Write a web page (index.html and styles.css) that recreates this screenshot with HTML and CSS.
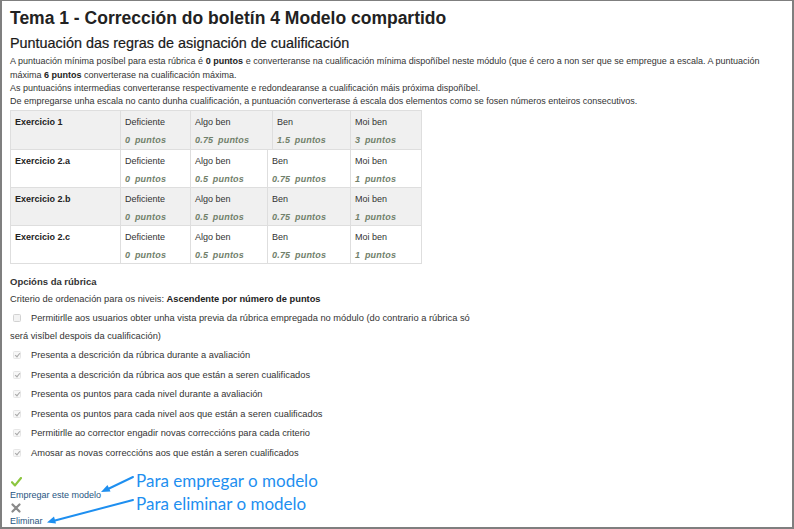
FILE: index.html
```html
<!DOCTYPE html>
<html lang="gl">
<head>
<meta charset="utf-8">
<title>Tema 1 - Corrección do boletín 4 Modelo compartido</title>
<link rel="stylesheet" href="styles.css">
</head>
<body>
<div class="frame">
  <h1 class="title">Tema 1 - Corrección do boletín 4 Modelo compartido</h1>
  <h2 class="subtitle">Puntuación das regras de asignación de cualificación</h2>
  <div class="intro">
    <p>A puntuación mínima posíbel para esta rúbrica é <b>0 puntos</b> e converteranse na cualificación mínima dispoñíbel neste módulo (que é cero a non ser que se empregue a escala. A puntuación<br>máxima <b>6 puntos</b> converterase na cualificación máxima.</p>
    <p>As puntuacións intermedias converteranse respectivamente e redondearanse a cualificación máis próxima dispoñíbel.</p>
    <p>De empregarse unha escala no canto dunha cualificación, a puntuación converterase á escala dos elementos como se fosen números enteiros consecutivos.</p>
  </div>

  <div class="rubric">
    <div class="crit shaded first wide">
      <div class="cell name">Exercicio 1</div>
      <div class="cell"><span class="lvl">Deficiente</span><span class="pts">0 <i>puntos</i></span></div>
      <div class="cell"><span class="lvl">Algo ben</span><span class="pts">0.75 <i>puntos</i></span></div>
      <div class="cell"><span class="lvl">Ben</span><span class="pts">1.5 <i>puntos</i></span></div>
      <div class="cell"><span class="lvl">Moi ben</span><span class="pts">3 <i>puntos</i></span></div>
    </div>
    <div class="crit">
      <div class="cell name">Exercicio 2.a</div>
      <div class="cell"><span class="lvl">Deficiente</span><span class="pts">0 <i>puntos</i></span></div>
      <div class="cell"><span class="lvl">Algo ben</span><span class="pts">0.5 <i>puntos</i></span></div>
      <div class="cell"><span class="lvl">Ben</span><span class="pts">0.75 <i>puntos</i></span></div>
      <div class="cell"><span class="lvl">Moi ben</span><span class="pts">1 <i>puntos</i></span></div>
    </div>
    <div class="crit shaded">
      <div class="cell name">Exercicio 2.b</div>
      <div class="cell"><span class="lvl">Deficiente</span><span class="pts">0 <i>puntos</i></span></div>
      <div class="cell"><span class="lvl">Algo ben</span><span class="pts">0.5 <i>puntos</i></span></div>
      <div class="cell"><span class="lvl">Ben</span><span class="pts">0.75 <i>puntos</i></span></div>
      <div class="cell"><span class="lvl">Moi ben</span><span class="pts">1 <i>puntos</i></span></div>
    </div>
    <div class="crit last">
      <div class="cell name">Exercicio 2.c</div>
      <div class="cell"><span class="lvl">Deficiente</span><span class="pts">0 <i>puntos</i></span></div>
      <div class="cell"><span class="lvl">Algo ben</span><span class="pts">0.5 <i>puntos</i></span></div>
      <div class="cell"><span class="lvl">Ben</span><span class="pts">0.75 <i>puntos</i></span></div>
      <div class="cell"><span class="lvl">Moi ben</span><span class="pts">1 <i>puntos</i></span></div>
    </div>
  </div>

  <div class="options">
    <h3 class="opt-title">Opcións da rúbrica</h3>
    <div class="sort">Criterio de ordenación para os niveis: <b>Ascendente por número de puntos</b></div>
    <div class="opt"><span class="cb"></span>Permitirlle aos usuarios obter unha vista previa da rúbrica empregada no módulo (do contrario a rúbrica só será visíbel despois da cualificación)</div>
    <div class="opt"><span class="cb on"></span>Presenta a descrición da rúbrica durante a avaliación</div>
    <div class="opt"><span class="cb on"></span>Presenta a descrición da rúbrica aos que están a seren cualificados</div>
    <div class="opt"><span class="cb on"></span>Presenta os puntos para cada nivel durante a avaliación</div>
    <div class="opt"><span class="cb on"></span>Presenta os puntos para cada nivel aos que están a seren cualificados</div>
    <div class="opt"><span class="cb on"></span>Permitirlle ao corrector engadir novas correccións para cada criterio</div>
    <div class="opt"><span class="cb on"></span>Amosar as novas correccións aos que están a seren cualificados</div>
  </div>

  <div class="actions">
    <a class="action" href="#">
      <svg class="ico" width="11" height="10" viewBox="0 0 11 10"><path d="M1 5.2 L4 8.4 L10 1" fill="none" stroke="#8cc63f" stroke-width="2.2" stroke-linecap="round" stroke-linejoin="round"/></svg>
      <span>Empregar este modelo</span>
    </a>
    <a class="action" href="#">
      <svg class="ico" width="10" height="10" viewBox="0 0 10 10"><path d="M1.5 1.5 L8.5 8.5 M8.5 1.5 L1.5 8.5" fill="none" stroke="#8a8a8a" stroke-width="2.2" stroke-linecap="round"/></svg>
      <span>Eliminar</span>
    </a>
  </div>

  <div class="note note-1">Para empregar o modelo</div>
  <div class="note note-2">Para eliminar o modelo</div>
  <svg class="arrows" width="794" height="529" viewBox="0 0 794 529">
    <g stroke="#1e8ff0" stroke-width="2" fill="#1e8ff0" stroke-linecap="round">
      <line x1="133" y1="477" x2="108" y2="489"/>
      <polygon points="101,492 107.5,485 110.5,491.5" stroke="none"/>
      <line x1="133" y1="500" x2="55" y2="520.5"/>
      <polygon points="47,522.5 54,516.5 56,523.5" stroke="none"/>
    </g>
  </svg>
</div>
</body>
</html>
```

FILE: styles.css
```css
* { box-sizing: border-box; }
html, body { margin: 0; padding: 0; background: #fff; }
body {
  font-family: "Liberation Sans", Arial, sans-serif;
  color: #333;
}
.frame {
  position: relative;
  width: 794px;
  height: 529px;
  border: 2px solid #7f7f7f;
  border-top-width: 1px;
  padding: 6px 8px 0 8px;
  overflow: hidden;
}
.title {
  margin: 0;
  font-size: 17.5px;
  line-height: 22px;
  font-weight: bold;
  color: #222;
}
.subtitle {
  margin: 6px 0 0 0;
  font-size: 14.4px;
  line-height: 16px;
  font-weight: normal;
  color: #1a1a1a;
  -webkit-text-stroke: 0.2px #1a1a1a;
}
.intro {
  margin-top: 4px;
  font-size: 9px;
  line-height: 13px;
}
.intro p { margin: 0; }
.intro p:first-child { line-height: 13.5px; }
.intro b { color: #222; }

.rubric {
  margin-top: 2px;
  width: 412px;
  border: 1.5px solid #dedede;
  font-size: 9px;
}
.crit {
  display: grid;
  grid-template-columns: 109px 70px 77px 83px 71px;
  height: 38px;
  border-top: 1.5px solid #dedede;
  background: #fff;
}
.crit.first { border-top: 0; }
.crit.wide { grid-template-columns: 109px 70px 82px 78px 71px; }
.crit.shaded { background: #f0f0f0; }
.cell {
  border-left: 1.5px solid #dedede;
  padding: 5px 4px 0 4px;
  display: flex;
  flex-direction: column;
  line-height: 13px;
}
.cell:first-child { border-left: 0; padding-left: 4px; }
.cell.name { font-weight: bold; color: #222; }
.lvl { color: #333; }
.pts {
  margin-top: 5px;
  font-style: italic;
  font-weight: bold;
  color: #71806b;
  letter-spacing: 0.2px;
}
.pts i { margin-left: 2px; }

.options {
  margin-top: 10px;
  font-size: 9.3px;
}
.opt-title {
  margin: 0;
  font-size: 9.5px;
  font-weight: bold;
  line-height: 16px;
  color: #333;
}
.sort { line-height: 19px; }
.sort b { color: #222; }
.opt {
  padding: 1px 0 1px 0;
  line-height: 17.5px;
  max-width: 472px;
}
.cb {
  display: inline-block;
  position: relative;
  vertical-align: -1px;
  margin: 0 10px 0 3px;
  width: 8px;
  height: 8px;
  border: 1px solid #d2d2d2;
  border-radius: 1.5px;
  background: #f3f3f3;
}
.cb.on {
  border-color: #e6e6e6;
  background: #f7f7f7;
}
.cb.on::after {
  content: "";
  position: absolute;
  left: 2px;
  top: 0px;
  width: 2px;
  height: 4px;
  border: solid #a8a8a8;
  border-width: 0 1.3px 1.3px 0;
  transform: rotate(40deg);
}

.actions {
  margin-top: 13px;
  font-size: 9px;
  display: flex;
  flex-direction: column;
}
.action {
  display: flex;
  flex-direction: column;
  align-items: flex-start;
  color: #27557f;
  text-decoration: none;
  line-height: 13.5px;
}
.action .ico { display: block; margin: 1px 0 1.5px 1px; }

.note {
  position: absolute;
  left: 134px;
  font-family: Lato, "Open Sans", sans-serif;
  font-size: 17px;
  line-height: 20px;
  color: #1e8ff0;
  white-space: nowrap;
}
.note-1 { top: 470px; }
.note-2 { top: 493px; }
.arrows {
  position: absolute;
  left: -2px;
  top: -1px;
  pointer-events: none;
}
```
